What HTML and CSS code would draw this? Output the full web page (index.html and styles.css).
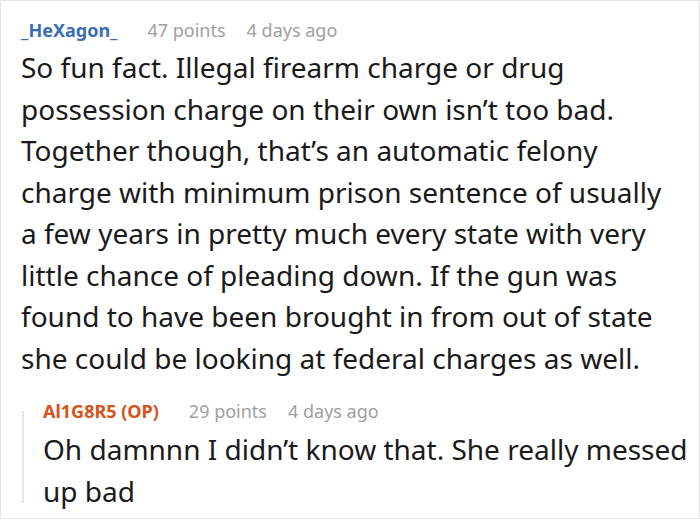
FILE: index.html
```html
<!DOCTYPE html>
<html>
<head>
<meta charset="utf-8">
<link rel="stylesheet" href="styles.css">
</head>
<body>
<div class="card">
  <div class="comment">
    <div class="meta">
      <span class="user">_HeXagon_</span>
      <span class="points">47 points</span>
      <span class="age">4 days ago</span>
    </div>
    <p class="text">So fun fact. Illegal firearm charge or drug<br>possession charge on their own isn’t too bad.<br>Together though, that’s an automatic felony<br>charge with minimum prison sentence of usually<br>a few years in pretty much every state with very<br>little chance of pleading down. If the gun was<br>found to have been brought in from out of state<br>she could be looking at federal charges as well.</p>
  </div>
  <div class="reply">
    <div class="meta">
      <span class="user op">Al1G8R5 (OP)</span>
      <span class="points">29 points</span>
      <span class="age">4 days ago</span>
    </div>
    <p class="text">Oh damnnn I didn’t know that. She really messed<br>up bad</p>
  </div>
</div>
</body>
</html>
```
FILE: styles.css
```css
html, body {
  margin: 0;
  padding: 0;
  background: #fff;
}
.card {
  box-sizing: border-box;
  width: 700px;
  height: 519px;
  border: 1px solid #e4e4e4;
  padding: 17px 0 0 20px;
  font-family: "Noto Sans", "Open Sans", sans-serif;
}
.meta {
  display: flex;
  font-size: 18px;
  line-height: 24px;
  color: #a0a0a0;
}
.user {
  font-weight: 700;
  color: #3a6db5;
  margin-right: 30px;
}
.points {
  margin-right: 21px;
}
.user.op {
  color: #d6541c;
}
.text {
  margin: 0;
  font-size: 28px;
  line-height: 41.5px;
  color: #1a1a1a;
  white-space: nowrap;
}
.comment .text {
  margin-top: 5px;
}
.reply {
  display: flow-root;
  margin: 32px 0 0 1px;
  border-left: 2px solid #e6e6e6;
  padding-left: 19px;
}
.reply .meta {
  margin-top: -12px;
}
.reply .text {
  margin-top: 6px;
  margin-bottom: -9px;
}
```
